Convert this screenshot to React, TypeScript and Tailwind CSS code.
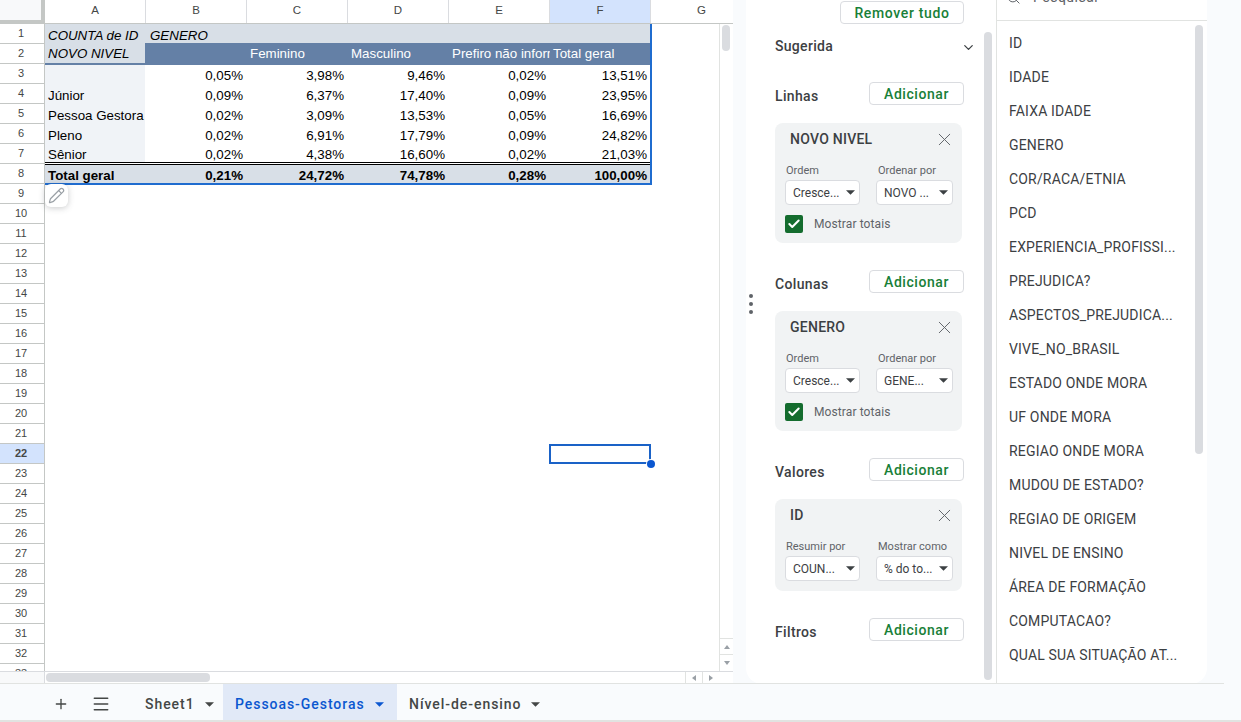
import { Check, ChevronDown, Menu, Pencil, Plus, Search, X } from "lucide-react";

const columns = ["A", "B", "C", "D", "E", "F", "G"];
const rowNumbers = Array.from({ length: 33 }, (_, i) => i + 1);

const bodyRows = [
  { label: "", values: ["0,05%", "3,98%", "9,46%", "0,02%", "13,51%"] },
  { label: "Júnior", values: ["0,09%", "6,37%", "17,40%", "0,09%", "23,95%"] },
  { label: "Pessoa Gestora", values: ["0,02%", "3,09%", "13,53%", "0,05%", "16,69%"] },
  { label: "Pleno", values: ["0,02%", "6,91%", "17,79%", "0,09%", "24,82%"] },
  { label: "Sênior", values: ["0,02%", "4,38%", "16,60%", "0,02%", "21,03%"] },
];
const totals = ["0,21%", "24,72%", "74,78%", "0,28%", "100,00%"];

const fields = [
  "ID",
  "IDADE",
  "FAIXA IDADE",
  "GENERO",
  "COR/RACA/ETNIA",
  "PCD",
  "EXPERIENCIA_PROFISSI...",
  "PREJUDICA?",
  "ASPECTOS_PREJUDICA...",
  "VIVE_NO_BRASIL",
  "ESTADO ONDE MORA",
  "UF ONDE MORA",
  "REGIAO ONDE MORA",
  "MUDOU DE ESTADO?",
  "REGIAO DE ORIGEM",
  "NIVEL DE ENSINO",
  "ÁREA DE FORMAÇÃO",
  "COMPUTACAO?",
  "QUAL SUA SITUAÇÃO AT...",
];

function Caret({ className = "" }: { className?: string }) {
  return (
    <svg width="9" height="5" viewBox="0 0 10 5" className={className}>
      <path d="M0 0h10L5 5z" fill="currentColor" />
    </svg>
  );
}

function AddButton() {
  return (
    <button className="w-[95px] h-[23px] rounded border border-[#dadce0] bg-white text-[14px] font-medium tracking-[0.55px] leading-[20px] text-[#188038]">
      Adicionar
    </button>
  );
}

function SectionHead({ title }: { title: string }) {
  return (
    <div className="flex justify-between items-start h-[23px]">
      <span className="mt-[5px] text-[14px] font-medium leading-[18px] tracking-[0.35px] text-[#3c4043]">{title}</span>
      <AddButton />
    </div>
  );
}

function SelectBox({ label, value, width, labelPad }: { label: string; value: string; width: string; labelPad: string }) {
  return (
    <div className={`${width} flex flex-col`}>
      <span className={`h-[17px] ${labelPad} text-[11px] leading-[16px] whitespace-nowrap text-[#5f6368]`}>{label}</span>
      <div className="h-[25px] flex items-center justify-between pl-[7px] pr-[3px] rounded border border-[#dadce0] bg-white text-[12px] text-[#3c4043]">
        <span className="whitespace-nowrap">{value}</span>
        <Caret className="text-[#3c4043] mr-[1px]" />
      </div>
    </div>
  );
}

function FieldCard(props: {
  title: string;
  left: [string, string];
  right: [string, string];
  totals?: boolean;
}) {
  return (
    <div className="w-[187px] rounded-lg bg-[#f1f3f4] pt-[7px] pb-[10px] pl-[10px] pr-[9px]">
      <div className="flex items-center justify-between h-[18px] pl-[5px] -mr-[2px]">
        <span className="text-[14px] font-medium tracking-[0.25px] text-[#3c4043]">{props.title}</span>
        <X size={21} strokeWidth={1.1} className="text-[#5f6368]" />
      </div>
      <div className="mt-[15px] flex justify-between">
        <SelectBox label={props.left[0]} value={props.left[1]} width="w-[75px]" labelPad="pl-px" />
        <SelectBox label={props.right[0]} value={props.right[1]} width="w-[77px]" labelPad="pl-[2px]" />
      </div>
      {props.totals && (
        <div className="mt-[10px] flex items-center gap-[11px]">
          <span className="w-[18px] h-[18px] rounded-[2px] bg-[#146c2e] flex items-center justify-center">
            <Check size={14} strokeWidth={3.5} className="text-white" />
          </span>
          <span className="text-[12px] text-[#5f6368] tracking-[0.1px]">Mostrar totais</span>
        </div>
      )}
    </div>
  );
}

function PivotTable() {
  return (
    <div className="w-[606px] text-[13.33px] leading-[20px] text-black font-['Liberation_Sans',sans-serif]">
      <div className="flex h-[19px] bg-[#d8dfe7] italic pt-[2px] whitespace-nowrap">
        <div className="w-[101px] pl-[3px]">COUNTA de ID</div>
        <div className="pl-[4px]">GENERO</div>
      </div>
      <div className="flex h-[22px]">
        <div className="w-[100px] pl-[3px] bg-[#d8dfe7] border-b-2 border-[#6480a6] italic leading-[21px]">NOVO NIVEL</div>
        <div className="flex-1 flex bg-[#6480a6] text-white leading-[22px] whitespace-nowrap">
          <div className="w-[102px]" />
          <div className="w-[101px] pl-[3px]">Feminino</div>
          <div className="w-[101px] pl-[3px]">Masculino</div>
          <div className="w-[101px] pl-[3px] overflow-hidden">Prefiro não informar</div>
          <div className="w-[101px] pl-[3px]">Total geral</div>
        </div>
      </div>
      {bodyRows.map((row, r) => {
        const tight = r === 0 || r === 4;
        return (
          <div key={row.label} className={`flex ${r === 0 ? "h-[19px]" : "h-5"} ${tight ? "pt-[1px]" : "pt-[2px]"}`}>
            <div className={`w-[100px] pl-[3px] bg-[#f0f3f7] whitespace-nowrap ${tight ? "-mt-[1px] pt-[1px]" : "-mt-[2px] pt-[2px]"}`}>
              {row.label}
            </div>
            {row.values.map((v, i) => (
              <div key={i} className="w-[101px] text-right pr-[3px]">
                {v}
              </div>
            ))}
          </div>
        );
      })}
      <div className="h-[3px] -mt-[2px] relative border-y border-black bg-white" />
      <div className="flex h-[20px] bg-[#d8dfe7] font-bold border-b-2 border-[#1f6ccf] leading-[21px]">
        <div className="w-[100px] pl-[3px]">Total geral</div>
        {totals.map((v) => (
          <div key={v} className="w-[101px] text-right pr-[3px]">
            {v}
          </div>
        ))}
      </div>
    </div>
  );
}

function Sheet() {
  return (
    <div className="w-[733px] shrink-0 flex flex-col relative bg-white font-['Liberation_Sans',sans-serif]">
      <div className="flex h-6 shrink-0 border-b border-[#c4c7c5] text-[11.5px] text-[#444746]">
        <div className="w-[45px] h-6 shrink-0 bg-[#f8f9fa] border-r-4 border-b-4 border-[#c4c7c5] -mb-px" />
        {columns.map((c) => (
          <div
            key={c}
            className={`w-[101px] shrink-0 flex items-center justify-center pb-[1px] border-r border-[#dadce0] ${
              c === "F" ? "bg-[#d3e3fd]" : ""
            } ${c === "G" ? "border-r-0" : ""}`}
          >
            {c}
          </div>
        ))}
      </div>
      <div className="flex flex-1 min-h-0 overflow-hidden">
        <div className="w-[45px] shrink-0 border-r border-[#c4c7c5]">
          {rowNumbers.map((n) => (
            <div
              key={n}
              className={`h-5 flex items-center justify-center pr-[2px] border-b border-[#c4c7c5] text-[11px] text-[#444746] ${
                n === 22 ? "bg-[#d3e3fd] font-bold text-[#0b57d0]" : ""
              }`}
            >
              {n}
            </div>
          ))}
        </div>
        <div className="flex-1 min-w-0 relative">
          <PivotTable />
          {/* right edge of the pivot selection, drawn over the cells */}
          <div className="absolute left-[605px] top-0 w-[2px] h-[161px] bg-[#1f6ccf]" />
          <div className="absolute left-0 top-[160px] w-[23px] h-[23px] rounded-md bg-white shadow-[0_1px_6px_rgba(60,64,67,0.28)] flex items-center justify-center">
            <Pencil size={17} strokeWidth={1.7} className="text-[#9aa0a6]" />
          </div>
          <div className="absolute left-[504px] top-[420px] w-[102px] h-[20px] border-2 border-[#1a62c7]">
            <span className="absolute -right-[6px] -bottom-[6px] w-[8px] h-[8px] rounded-full bg-[#0b57d0] ring-1 ring-white" />
          </div>
        </div>
        <div className="w-[14px] shrink-0 relative bg-white border-l border-[#e1e3e1]">
          <div className="absolute left-[2px] top-[1px] w-[8px] h-[26px] rounded bg-[#dadce0]" />
          <div className="absolute bottom-[16px] left-0 right-0 h-[17px] border-t border-b border-[#e1e3e1] flex items-center justify-center">
            <span className="w-0 h-0 border-x-[3px] border-x-transparent border-b-[4px] border-b-[#9aa0a6]" />
          </div>
          <div className="absolute bottom-[1px] left-0 right-0 h-[14px] flex items-center justify-center">
            <span className="w-0 h-0 border-x-[3px] border-x-transparent border-t-[4px] border-t-[#9aa0a6]" />
          </div>
        </div>
      </div>
      <div className="h-[13px] shrink-0 flex border-t border-[#dadce0] bg-white">
        <div className="w-[45px] bg-[#f8f9fa] border-r border-[#dadce0]" />
        <div className="flex-1 relative">
          <div className="absolute left-[1px] top-[1px] w-[164px] h-[9px] rounded bg-[#dadce0]" />
          <div className="absolute right-[14px] top-0 h-[12px] w-[34px] flex border-l border-[#e1e3e1]">
            <span className="flex-1 flex items-center justify-center border-r border-[#e1e3e1]">
              <span className="w-0 h-0 border-y-[3px] border-y-transparent border-r-[4px] border-r-[#9aa0a6]" />
            </span>
            <span className="flex-1 flex items-center justify-center">
              <span className="w-0 h-0 border-y-[3px] border-y-transparent border-l-[4px] border-l-[#9aa0a6]" />
            </span>
          </div>
        </div>
      </div>
    </div>
  );
}

function EditorPanel() {
  return (
    <div className="w-[250px] shrink-0 relative pl-[29px] pr-[32px] pt-[1px]">
      <div className="flex justify-end w-[189px]">
        <button className="w-[124px] h-[23px] rounded border border-[#dadce0] text-[14px] font-medium tracking-[0.65px] leading-[20px] text-[#188038]">
          Remover tudo
        </button>
      </div>
      <div className="mt-[13px] w-[201px] h-[18px] flex items-center justify-between">
        <span className="text-[14px] font-medium leading-[18px] tracking-[0.3px] text-[#3c4043]">Sugerida</span>
        <ChevronDown size={15} strokeWidth={2} className="text-[#3c4043] mt-[2px]" />
      </div>
      <div className="w-[189px] mt-[27px]">
        <SectionHead title="Linhas" />
        <div className="mt-[18px]">
          <FieldCard title="NOVO NIVEL" left={["Ordem", "Cresce..."]} right={["Ordenar por", "NOVO ..."]} totals />
        </div>
      </div>
      <div className="w-[189px] mt-[27px]">
        <SectionHead title="Colunas" />
        <div className="mt-[18px]">
          <FieldCard title="GENERO" left={["Ordem", "Cresce..."]} right={["Ordenar por", "GENE..."]} totals />
        </div>
      </div>
      <div className="w-[189px] mt-[27px]">
        <SectionHead title="Valores" />
        <div className="mt-[18px]">
          <FieldCard title="ID" left={["Resumir por", "COUN..."]} right={["Mostrar como", "% do to..."]} />
        </div>
      </div>
      <div className="w-[189px] mt-[27px]">
        <SectionHead title="Filtros" />
      </div>
      {/* scrollbar */}
      <div className="absolute left-[238px] top-[32px] w-[8px] h-[648px] rounded bg-[#dadce0]" />
    </div>
  );
}

function FieldList() {
  return (
    <div className="w-[211px] shrink-0 relative border-l border-[#e1e3e1] overflow-hidden">
      <div className="h-[21px] border-b border-[#e1e3e1] overflow-hidden">
        <div className="-mt-[18px] h-[30px] flex items-center pl-[9px] gap-[12px] text-[14px] text-[#5f6368]">
          <Search size={15} strokeWidth={1.6} />
          <span className="tracking-[0.5px]">Pesquisar</span>
        </div>
      </div>
      <div className="pt-[5px] pl-[12px]">
        {fields.map((f) => (
          <div key={f} className="h-[34px] flex items-center text-[14px] tracking-[0.18px] whitespace-nowrap text-[#3c4043]">
            {f}
          </div>
        ))}
      </div>
      <div className="absolute left-[198px] top-[25px] w-[8px] h-[429px] rounded bg-[#dadce0]" />
    </div>
  );
}

function TabBar() {
  return (
    <div className="h-[38px] shrink-0 border-b-2 border-[#e1e3e1] flex items-center font-['Roboto',sans-serif] text-[14px] font-medium tracking-[0.95px] text-[#444746]">
      <Plus size={16} strokeWidth={2} className="ml-[53px] mt-[4px] text-[#444746]" />
      <Menu size={20} strokeWidth={1.8} className="ml-[22px] mt-[4px] text-[#444746]" />
      <div className="ml-[34px] w-[78px] h-full flex items-center gap-[10px] pt-[5px]">
        <span>Sheet1</span>
        <Caret />
      </div>
      <div className="w-[174px] h-full pl-[12px] pt-[5px] flex items-center gap-[10px] bg-[#e1e9f7] text-[#0b57d0]">
        <span>Pessoas-Gestoras</span>
        <Caret />
      </div>
      <div className="pl-[12px] pt-[5px] flex items-center gap-[10px]">
        <span>Nível-de-ensino</span>
        <Caret />
      </div>
    </div>
  );
}

export default function App() {
  return (
    <div className="w-[1241px] h-[722px] overflow-hidden flex flex-col bg-[#f9fbfd] font-['Roboto',sans-serif]">
      <div className="h-[684px] shrink-0 flex w-full relative">
        <Sheet />
        <div className="w-[13px] shrink-0" />
        <div className="flex bg-white rounded-b-2xl overflow-hidden">
          <EditorPanel />
          <FieldList />
        </div>
        {/* drag handle between the sheet and the pivot editor */}
        <div className="absolute left-[749px] top-[294px] flex flex-col gap-[4px]">
          <span className="w-1 h-1 rounded-full bg-[#5f6368]" />
          <span className="w-1 h-1 rounded-full bg-[#5f6368]" />
          <span className="w-1 h-1 rounded-full bg-[#5f6368]" />
        </div>
        <div className="absolute left-0 right-[17px] bottom-0 h-px bg-[#e1e3e1]" />
      </div>
      <TabBar />
    </div>
  );
}
